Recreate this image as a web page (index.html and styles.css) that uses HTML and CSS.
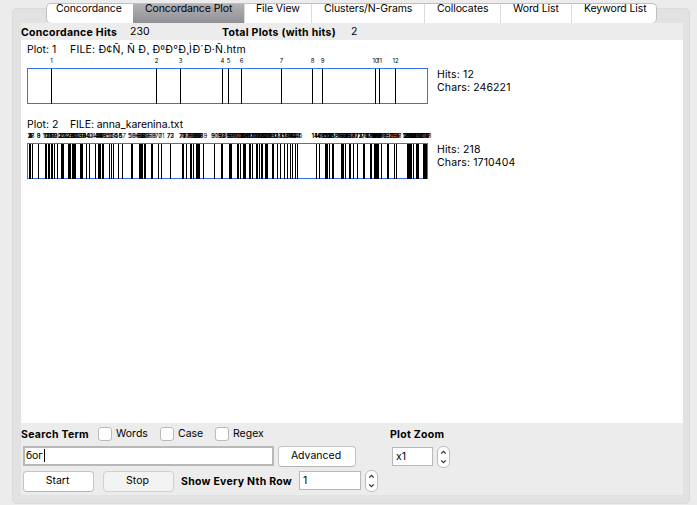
FILE: index.html
```
<!DOCTYPE html>
<html lang="en">
<head>
<meta charset="utf-8">
<title>Concordance Plot</title>
<link rel="stylesheet" href="styles.css">
</head>
<body>
<main class="group">
  <nav class="tabs">
    <span class="tab t1">Concordance</span>
    <span class="tab t2 active">Concordance Plot</span>
    <span class="tab t3">File View</span>
    <span class="tab t4">Clusters/N-Grams</span>
    <span class="tab t5">Collocates</span>
    <span class="tab t6">Word List</span>
    <span class="tab t7">Keyword List</span>
  </nav>
  <section class="panel">
    <header class="summary">
      <b class="s1">Concordance Hits</b><span class="s2">230</span>
      <b class="s3">Total Plots (with hits)</b><span>2</span>
    </header>
    <div class="plots">
      <article class="plot">
        <div class="title"><span class="num">Plot: 1</span><span class="file1">FILE: Ð¢Ñ, Ñ Ð¸ ÐºÐ°Ð¸ÌÐ´Ð·Ñ.htm</span></div>
        <div class="row">
          <svg class="chart" id="plot1" width="420" height="49"></svg>
          <div class="info"><div class="hits">Hits: 12</div><div class="chars">Chars: 246221</div></div>
        </div>
      </article>
      <article class="plot">
        <div class="title"><span class="num">Plot: 2</span><span class="file2">FILE: anna_karenina.txt</span></div>
        <div class="row">
          <svg class="chart" id="plot2" width="420" height="49"></svg>
          <div class="info"><div class="hits">Hits: 218</div><div class="chars">Chars: 1710404</div></div>
        </div>
      </article>
    </div>
    <footer class="controls">
      <div class="left">
        <div class="options">
          <b class="term">Search Term</b>
          <i class="check"></i><span class="o1">Words</span>
          <i class="check"></i><span class="o2">Case</span>
          <i class="check"></i><span class="o3">Regex</span>
        </div>
        <div class="line">
          <div class="field search"><span>бог</span><i class="caret"></i></div>
          <div class="btn adv"><span>Advanced</span></div>
        </div>
        <div class="line second">
          <div class="btn start"><span>Start</span></div>
          <div class="btn stop"><span>Stop</span></div>
          <b class="nth">Show Every Nth Row</b>
          <div class="field rows">1</div>
          <svg class="stepper" width="13" height="22"><rect x=".5" y=".5" width="12" height="21" rx="5.5"/><path d="M4.2 7.6 6.5 5.3 8.8 7.6M4.2 14.4 6.5 16.7 8.8 14.4"/></svg>
        </div>
      </div>
      <div class="right">
        <b class="pz">Plot Zoom</b>
        <div class="zoomrow">
          <div class="field zoom">x1</div>
          <svg class="stepper" width="13" height="22"><rect x=".5" y=".5" width="12" height="21" rx="5.5"/><path d="M4.2 7.6 6.5 5.3 8.8 7.6M4.2 14.4 6.5 16.7 8.8 14.4"/></svg>
        </div>
      </div>
    </footer>
  </section>
</main>
<script src="plots.js"></script>
</body>
</html>
```
FILE: styles.css
```
* { box-sizing: border-box; }
body {
  margin: 0;
  height: 505px;
  overflow: hidden;
  background: #ececec;
  padding: 8px 7px 0 12px;
  font: 10.5px/13px Inter, "Liberation Sans", sans-serif;
  letter-spacing: 0;
  color: #000;
}
b { font-weight: 700; letter-spacing: .27px; white-space: nowrap; }
span { white-space: nowrap; }
.group {
  height: 496px;
  width: 678px;
  background: #e2e2e2;
  border: 1px solid #dadada;
  border-radius: 5px;
  padding: 0 7px 0 8px;
}
.tabs {
  display: flex;
  width: 611px;
  height: 20px;
  margin: -6px 0 0 25px;
  background: #fff;
  border: 1px solid #c0c0c0;
  border-bottom: 0;
  border-radius: 5px;
  overflow: hidden;
  letter-spacing: -.1px;
}
.tab { border-left: 1px solid #dcdcdc; line-height: 9px; padding-left: 12px; height: 20px; }
.t1 { width: 86px; border: 0; padding-left: 9px; }
.t2 { width: 111px; }
.t3 { width: 67px; padding-left: 11px; }
.t4 { width: 113px; }
.t5 { width: 76px; }
.t6 { width: 71px; }
.t7 { flex: 1; }
.active { background: linear-gradient(#b2b1b6, #8f8e93); border: 0; }
.panel { height: 472px; width: 662px; background: #ececec; }
.summary { display: flex; height: 17px; padding-top: 2px; line-height: 13px; }
.summary b { padding-top: 1px; }
.s1 { width: 109px; }
.s2 { width: 92px; }
.s3 { width: 129px; }
.plots { height: 383px; background: #fff; padding: 4px 0 0 6px; }
.plot { height: 75px; }
.title { display: flex; height: 13px; line-height: 12px; }
.num { width: 43px; }
.file1 { letter-spacing: .2px; }
.file2 { letter-spacing: -.08px; }
.row { display: flex; }
.chart { margin: -1px 0 0 -6px; overflow: visible; flex: none; }
.chart text { font: 6px Inter, sans-serif; letter-spacing: 0; text-anchor: middle; fill: #000; }
.box { fill: none; stroke: #3870f4; }
.info { padding-top: 11px; margin-left: -4px; white-space: nowrap; letter-spacing: .13px; }
.controls { display: flex; height: 72px; }
.left { width: 369px; }
.options { display: flex; height: 22px; padding-top: 4px; line-height: 14px; }
.term { width: 77px; padding-top: 1px; }
.check { width: 14px; height: 14px; background: #fff; border: 1px solid #bababa; border-radius: 3px; margin-right: 4px; }
.o1 { width: 44px; }
.o2 { width: 37px; }
.line { display: flex; padding-left: 2px; height: 26px; }
.field { background: #fff; border: 1px solid #b8b8b8; height: 19px; line-height: 18px; padding-left: 3px; }
.search { width: 251px; height: 20px; margin-top: 1px; border-width: 2px; display: flex; line-height: 16px; padding-left: 1px; letter-spacing: -.1px; }
.caret { width: 1px; height: 13px; background: #000; margin: 1px 0 0 1px; }
.btn { height: 21px; border: 1px solid #c4c4c4; border-bottom-color: #b4b4b4; border-radius: 4px; background: #fff; text-align: center; line-height: 18px; }
.adv { width: 78px; margin-left: 4px; margin-top: 1px; padding-right: 2px; }
.start { width: 71px; margin-right: 9px; padding-right: 2px; }
.stop { width: 71px; padding-right: 2px; background: #f3f3f3; border-color: #d0d0d0; }
.nth { width: 118px; margin-left: 7px; padding-top: 4px; }
.rows { width: 62px; }
.stepper { margin: -1px 0 0 4px; flex: none; }
.stepper rect { fill: #fff; stroke: #bcbcbc; }
.stepper path { fill: none; stroke: #333; stroke-width: 1.3; }
.pz { display: block; padding-top: 5px; height: 24px; }
.zoomrow { display: flex; padding-left: 2px; }
.zoom { width: 41px; }
```
FILE: plots.js
```
const NS = 'http://www.w3.org/2000/svg';
function add(svg, name, attrs, text) {
  const el = document.createElementNS(NS, name);
  for (const k in attrs) el.setAttribute(k, attrs[k]);
  if (text !== undefined) el.textContent = text;
  svg.appendChild(el);
}
// Positions are window columns; the chart starts at column 21.
const ORIGIN = 21;
function draw(id, bars, labels) {
  const svg = document.getElementById(id);
  add(svg, 'rect', { class: 'box', x: 6.5, y: 12.5, width: 400, height: 35 });
  for (const [x, w] of bars) add(svg, 'rect', { x: x - ORIGIN, y: 13, width: w, height: 35 });
  for (const [x, n] of labels) add(svg, 'text', { x: x - ORIGIN + 0.5, y: 7 }, n);
}
const first = [51, 156, 180, 222, 228, 241, 281, 312, 322, 375, 379, 395];
draw('plot1', first.map(x => [x, 1]), first.map((x, i) => [x, i + 1]));

const second = [[29,2],[32,1],[38,1],[45,2],[48,2],[51,2],[54,1],[57,1],[61,3],[68,3],[72,4],[80,3],[86,1],[89,1],[95,1],[98,3],[102,2],[109,1],[111,1],[113,1],[118,1],[122,1],[131,2],[139,4],[144,2],[151,2],[158,1],[161,1],[170,1],[182,2],[186,1],[190,2],[193,1],[196,4],[203,1],[214,1],[221,2],[229,3],[237,2],[240,1],[243,3],[249,2],[252,1],[256,2],[259,1],[261,2],[265,3],[272,2],[277,1],[280,1],[284,1],[287,1],[290,1],[292,1],[295,1],[297,1],[316,1],[319,1],[325,3],[329,1],[332,2],[341,3],[345,1],[349,2],[353,1],[357,1],[363,2],[370,2],[374,5],[381,1],[387,2],[394,1],[396,1],[407,5],[413,1],[416,3],[423,4]];
const columns = second.flatMap(([x, w]) => Array.from({ length: w }, (_, i) => x + i));
// Hit numbers whose column is known; the hits between them share the columns evenly.
const known = [[29,1],[38,8],[118,55],[170,72],[203,89],[214,90],[316,146],[426,218]];
const labels = [[29, 1]];
for (let k = 1; k < known.length; k++) {
  const [x0, n0] = known[k - 1], [x1, n1] = known[k];
  const a = columns.indexOf(x0), b = columns.indexOf(x1);
  for (let n = n0 + 1; n <= n1; n++) {
    const start = n === n1 ? b : Math.min(b - 1, a + Math.floor((n - n0) * (b - a) / (n1 - n0)));
    labels.push([columns[start], n]);
  }
}
draw('plot2', second, labels);
```
